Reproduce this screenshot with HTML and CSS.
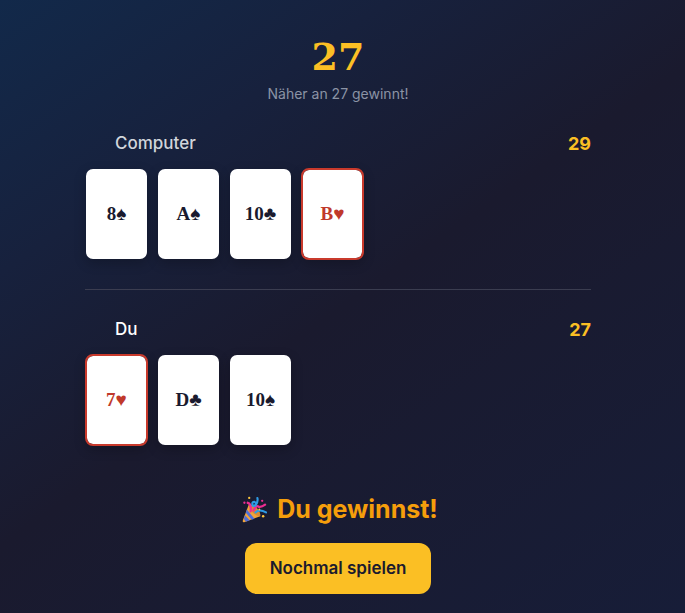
FILE: index.html
```
<!DOCTYPE html>
<html lang="de">
<head>
    <meta charset="UTF-8">
    <meta name="viewport" content="width=device-width, initial-scale=1.0">
    <title>27</title>
    <link rel="stylesheet" href="styles.css">
</head>
<body>

<main class="game">
    <header class="header">
        <h1>27</h1>
        <p>Näher an 27 gewinnt!</p>
    </header>

    <section class="player">
        <div class="player-info">
            <h2 class="name">Computer</h2>
            <span class="score">29</span>
        </div>
        <div class="cards">
            <div class="card">8<span class="suit">♠</span></div>
            <div class="card">A<span class="suit">♠</span></div>
            <div class="card">10<span class="suit">♣</span></div>
            <div class="card red">B<span class="suit">♥</span></div>
        </div>
    </section>

    <hr class="divider">

    <section class="player">
        <div class="player-info">
            <h2 class="name active">Du</h2>
            <span class="score">27</span>
        </div>
        <div class="cards">
            <div class="card red">7<span class="suit">♥</span></div>
            <div class="card">D<span class="suit">♣</span></div>
            <div class="card">10<span class="suit">♠</span></div>
        </div>
    </section>

    <div class="result">
        <p class="message">
            <svg class="party" viewBox="0 0 26 28" aria-hidden="true">
                <path d="M7 9 L19 21 L3 27 Q0 28 1 25 Z" fill="#f2a33a"/>
                <path d="M5 14 L13 23.500 L10 24.600 L4 17.500 Z M3 20 L8 25.300 L4 26.700 L2 24 Z" fill="#4f6fd8"/>
                <path d="M7 9 Q11 8 16 13 Q20 18 19 21 Q15 21 11 17 Q7 13 7 9 Z" fill="#d98a34"/>
                <path d="M6 7 Q10 8 9 16 M12 15 Q15 9 17 11 Q20 12 24 9" fill="none" stroke="#ee2d92" stroke-width="2.400" stroke-linecap="round"/>
                <path d="M11 9 Q10 6 13 6 Q16 8 13 10 Q10 11 11 7 M14 10 Q17 6 16 2 M14 17 Q18 13 25 17" fill="none" stroke="#2e9be5" stroke-width="2.200" stroke-linecap="round"/>
                <g fill="#ffc83d">
                    <circle cx="7.500" cy="2" r="1.200"/>
                    <circle cx="22" cy="21" r="1.300"/>
                    <circle cx="18" cy="14" r="1"/>
                </g>
                <g fill="#ee2d92">
                    <circle cx="2.500" cy="7" r="1.200"/>
                    <circle cx="21" cy="5" r="1.200"/>
                </g>
            </svg>
            Du gewinnst!
        </p>
        <button type="button" class="again">Nochmal spielen</button>
    </div>
</main>

</body>
</html>
```
FILE: styles.css
```
* {
    box-sizing: border-box;
    margin: 0;
    padding: 0;
}
body {
    min-height: 100vh;
    padding: 32px 94px 19px 85px;
    font-family: Inter, "Open Sans", sans-serif;
    color: #fff;
    background: linear-gradient(145deg, #12294a 0%, #17213d 25%, #1a1a2e 50%, #171d38 100%);
}
.header {
    text-align: center;
}
.header h1 {
    font-family: "DejaVu Serif", serif;
    font-size: 38px;
    line-height: 50px;
    color: #fbbf24;
}
.header p {
    font-size: 14px;
    line-height: 24px;
    color: #8b93a5;
}
.player-info {
    display: flex;
    justify-content: space-between;
    align-items: center;
    height: 26px;
    margin-bottom: 12px;
    padding-left: 30px;
}
.header + .player {
    margin-top: 24px;
}
.name {
    font-size: 17px;
    font-weight: 500;
    color: #d1d5db;
}
.name.active {
    color: #fff;
}
.score {
    font-size: 18px;
    font-weight: 700;
    color: #fbbf24;
}
.cards {
    display: flex;
    gap: 9px;
}
.card {
    display: flex;
    align-items: center;
    justify-content: center;
    width: 63px;
    height: 92px;
    border: 1px solid transparent;
    border-radius: 8px;
    background: #fff;
    background-clip: padding-box;
    box-shadow: 0 4px 12px rgba(0, 0, 0, 0.2);
    font-family: "Liberation Serif", serif;
    font-size: 19px;
    font-weight: 700;
    color: #1a1a2e;
}
.card.red {
    border: 2px solid #c93a2c;
    color: #c0392b;
}
.suit {
    font-size: 19px;
}
.divider {
    margin: 29px 0 26px;
    border: 0;
    border-top: 1px solid #3b3d50;
}
.result {
    display: flex;
    flex-direction: column;
    align-items: center;
    gap: 16px;
    margin-top: 45px;
}
.message {
    display: flex;
    align-items: center;
    gap: 10px;
    padding-left: 4px;
    font-size: 25px;
    font-weight: 700;
    line-height: 36px;
    color: #f59e0b;
}
.party {
    width: 25px;
    height: 27px;
}
.again {
    padding: 14px 25px;
    border: 0;
    border-radius: 12px;
    background: #fbbf24;
    color: #1a1a2e;
    font-family: inherit;
    font-size: 17px;
    font-weight: 600;
    line-height: 23px;
    cursor: pointer;
}
```
